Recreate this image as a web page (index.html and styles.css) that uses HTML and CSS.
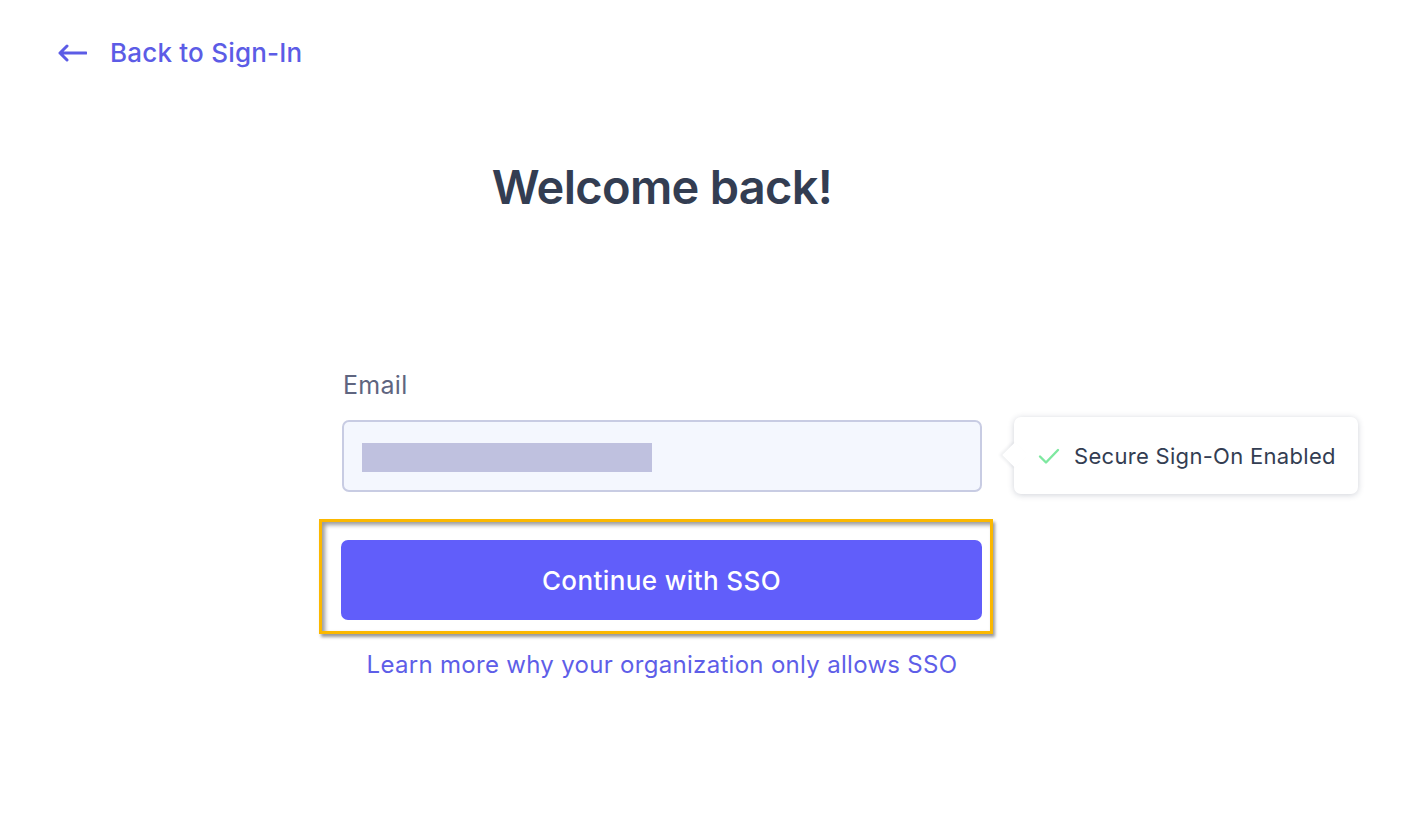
FILE: index.html
```html
<!DOCTYPE html>
<html lang="en">
<head>
<meta charset="utf-8">
<title>Welcome back!</title>
<link rel="stylesheet" href="styles.css">
</head>
<body>
<header class="topbar">
  <a class="back-link" href="#">
    <svg class="back-icon" width="30" height="18" viewBox="0 0 30 18" aria-hidden="true">
      <path d="M29 9H3M10 2L3 9l7 7" fill="none" stroke="currentColor" stroke-width="3" stroke-linecap="round" stroke-linejoin="round"/>
    </svg>
    <span>Back to Sign-In</span>
  </a>
</header>
<main class="panel">
  <h1 class="title">Welcome back!</h1>
  <form class="form">
    <label class="label" for="email">Email</label>
    <div class="field">
      <div class="input" id="email"><span class="redacted"></span></div>
      <div class="tip">
        <svg class="tip-check" width="22" height="18" viewBox="0 0 22 18" aria-hidden="true">
          <path d="M2 9.5l6 6L20 3" fill="none" stroke="currentColor" stroke-width="2.4" stroke-linecap="round" stroke-linejoin="round"/>
        </svg>
        <span>Secure Sign-On Enabled</span>
      </div>
    </div>
    <div class="highlight">
      <button type="button" class="btn">Continue with SSO</button>
    </div>
    <a class="learn" href="#">Learn more why your organization only allows SSO</a>
  </form>
</main>
</body>
</html>
```
FILE: styles.css
```css
* { box-sizing: border-box; }
html, body { margin: 0; padding: 0; background: #ffffff; }
body {
  font-family: "Inter", "Noto Sans", "Liberation Sans", sans-serif;
  color: #333d52;
  width: 1420px;
  height: 830px;
  overflow: hidden;
}
a { text-decoration: none; }

.topbar {
  padding: 37px 0 0 57px;
  height: 100px;
}
.back-link {
  display: inline-flex;
  align-items: center;
  gap: 23px;
  color: #5c5ce6;
  font-size: 26px;
  font-weight: 500;
  letter-spacing: 0.2px;
}
.back-icon { display: block; }

.panel {
  width: 640px;
  margin-left: 342px;
}
.title {
  margin: 59px 0 0;
  text-align: center;
  font-size: 47px;
  font-weight: 600;
  letter-spacing: -0.7px;
  line-height: 56px;
  color: #333d52;
}
.form {
  margin-top: 155px;
  display: flex;
  flex-direction: column;
}
.label {
  font-size: 25px;
  color: #5f6580;
  line-height: 30px;
  margin-left: 1px;
  letter-spacing: 0.3px;
}
.field {
  position: relative;
  margin-top: 20px;
}
.input {
  height: 72px;
  background: #f4f7fe;
  border: 2px solid #c8cce3;
  border-radius: 7px;
  padding: 21px 18px;
}
.redacted {
  display: block;
  width: 290px;
  height: 29px;
  background: #bfc1df;
}
.tip {
  position: absolute;
  left: 672px;
  top: -3px;
  width: 344px;
  height: 77px;
  background: #ffffff;
  border-radius: 7px;
  box-shadow: 0 1px 6px rgba(40, 50, 80, 0.22);
  display: flex;
  align-items: center;
  padding-left: 24px;
  gap: 14px;
  font-size: 22px;
  letter-spacing: 0.3px;
  color: #333d52;
}
.tip::before {
  content: "";
  position: absolute;
  left: -8px;
  top: 29px;
  width: 18px;
  height: 18px;
  background: #ffffff;
  transform: rotate(45deg);
  box-shadow: -2px 2px 3px rgba(40, 50, 80, 0.08);
}
.tip-check { color: #7ee8a0; position: relative; }
.tip span { position: relative; }

.highlight {
  margin: 27px -11px 0 -23px;
  border: 3px solid #fbb800;
  padding: 18px 8px 11px 19px;
  box-shadow: inset 3px 3px 4px rgba(0, 0, 0, 0.4), 2px 3px 3px rgba(0, 0, 0, 0.4);
}
.btn {
  display: block;
  width: 100%;
  height: 80px;
  border: 0;
  border-radius: 7px;
  background: #615efa;
  color: #ffffff;
  font-family: inherit;
  font-size: 26px;
  font-weight: 500;
  letter-spacing: 0.4px;
  cursor: pointer;
}
.learn {
  margin-top: 17px;
  text-align: center;
  font-size: 24px;
  letter-spacing: 0.3px;
  color: #5e5ee8;
  line-height: 28px;
}
```
